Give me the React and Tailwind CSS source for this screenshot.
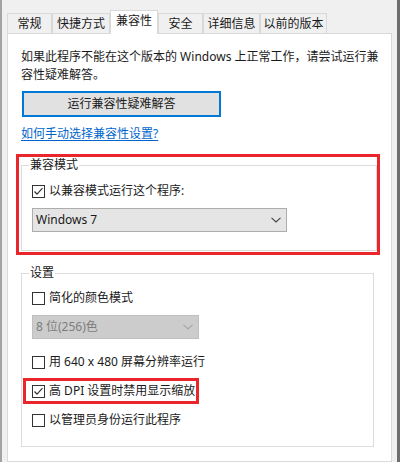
import React from "react";

const tabs = [
  { label: "常规", w: "w-[45px]" },
  { label: "快捷方式", w: "w-[58px]" },
  { label: "兼容性", w: "w-[48px]", active: true },
  { label: "安全", w: "w-[45px]" },
  { label: "详细信息", w: "w-[57px]" },
  { label: "以前的版本", w: "w-[67px]" },
];

function CheckRow({ checked = false, label }) {
  return (
    <div className="flex items-center h-[18px]">
      <span className="w-[13px] h-[13px] shrink-0 border border-[#333333] bg-white flex items-center justify-center">
        {checked && (
          <svg width="11" height="11" viewBox="0 0 11 11">
            <polyline
              points="1.5,5.5 4,8.2 9.5,2.2"
              fill="none"
              stroke="#333333"
              strokeWidth="1.2"
            />
          </svg>
        )}
      </span>
      <span className="ml-[4px] whitespace-nowrap">{label}</span>
    </div>
  );
}

function Chevron({ color }) {
  return (
    <svg width="10" height="6" viewBox="0 0 10 6">
      <polyline points="0.5,0.8 5,5 9.5,0.8" fill="none" stroke={color} strokeWidth="1.1" />
    </svg>
  );
}

export default function App() {
  return (
    <div className="w-[400px] h-[462px] flex flex-col overflow-hidden bg-[#f0f0f0] border-l-2 border-l-[#a3a3a3] border-r-[3px] border-r-[#6e6e6e] text-[12px] leading-[18px] text-[#1a1a1a] font-['Noto_Sans','Noto_Sans_CJK_SC',sans-serif]">
      {/* tab strip */}
      <div className="flex items-end pt-[10px] pl-[5px]">
        {tabs.map((t) =>
          t.active ? (
            <div
              key={t.label}
              className={`${t.w} relative z-10 h-[24px] -mb-px bg-white border border-b-0 border-[#d9d9d9] flex items-start justify-center pt-[1px]`}
            >
              {t.label}
            </div>
          ) : (
            <div
              key={t.label}
              className={`${t.w} h-[20px] bg-[#f0f0f0] border border-b-0 border-[#d9d9d9] flex items-center justify-center`}
            >
              {t.label}
            </div>
          )
        )}
      </div>

      {/* page */}
      <div className="flex-1 mx-[5px] bg-white border border-[#d9d9d9] pt-[14px] pl-[13px]">
        <p className="whitespace-nowrap">
          如果此程序不能在这个版本的 Windows 上正常工作，请尝试运行兼
          <br />
          容性疑难解答。
        </p>

        <button className="mt-[7px] ml-px w-[199px] h-[26px] bg-[#e1e1e1] border-2 border-[#0078d7] flex items-center justify-center">
          运行兼容性疑难解答
        </button>

        <div className="mt-[8px]">
          <a className="text-[#0066cc] underline underline-offset-2 cursor-pointer">
            如何手动选择兼容性设置?
          </a>
        </div>

        {/* compatibility mode, highlighted */}
        <div className="mt-[11px] -ml-[5px] w-[364px] border-[3px] border-[#e8262b] pl-[2px] pb-[1px]">
          <fieldset className="w-[356px] border border-[#dcdcdc] pl-[10px] pt-[9px] pb-[18px]">
            <legend className="-ml-[3px] px-[1px] leading-[16px]">兼容模式</legend>
            <CheckRow checked label="以兼容模式运行这个程序:" />
            <div className="mt-[8px] w-[255px] h-[24px] bg-[#e5e5e5] border border-[#adadad] flex items-center justify-between pl-[3px] pr-[5px]">
              <span>Windows 7</span>
              <Chevron color="#444444" />
            </div>
          </fieldset>
        </div>

        {/* settings */}
        <fieldset className="mt-[10px] w-[353px] border border-[#dcdcdc] pl-[10px] pt-[8px] pb-[17px]">
          <legend className="-ml-[3px] px-[1px] leading-[16px]">设置</legend>
          <CheckRow label="简化的颜色模式" />
          <div className="mt-[8px] w-[167px] h-[24px] bg-[#cccccc] border border-[#bfbfbf] flex items-center justify-between pl-[3px] pr-[5px] text-[#7d7d7d]">
            <span>8 位(256)色</span>
            <Chevron color="#a5a5a5" />
          </div>
          <div className="mt-[14px]">
            <CheckRow label="用 640 x 480 屏幕分辨率运行" />
          </div>
          <div className="mt-[7px] -ml-[9px] w-[176px] border-[3px] border-[#e8262b] pl-[6px] py-[1px]">
            <CheckRow checked label="高 DPI 设置时禁用显示缩放" />
          </div>
          <div className="mt-[7px]">
            <CheckRow label="以管理员身份运行此程序" />
          </div>
        </fieldset>
      </div>
    </div>
  );
}
